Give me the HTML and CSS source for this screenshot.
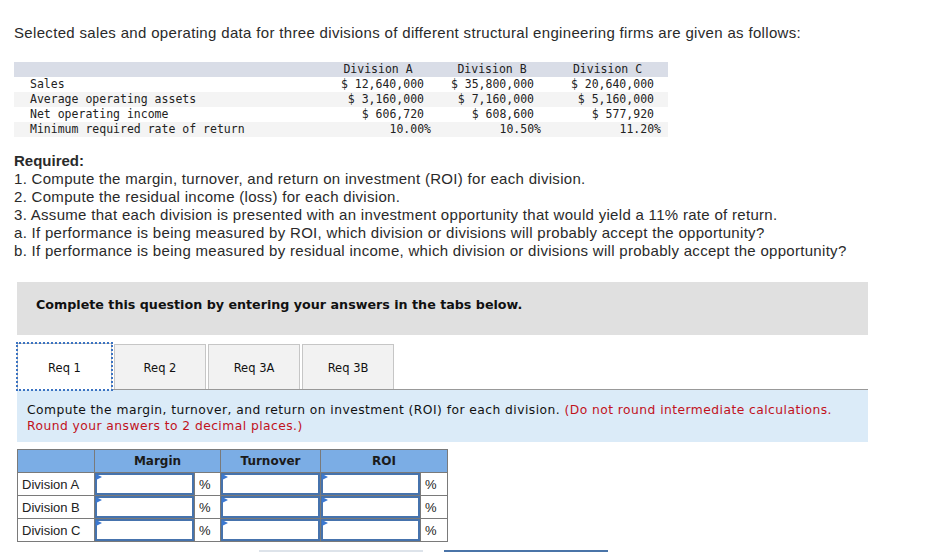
FILE: index.html
```html
<!DOCTYPE html>
<html>
<head>
<meta charset="utf-8">
<link rel="stylesheet" href="styles.css">
</head>
<body>
<div class="page">
  <p class="intro">Selected sales and operating data for three divisions of different structural engineering firms are given as follows:</p>

  <table class="data">
    <thead>
      <tr><th class="lbl"></th><th class="ca">Division A</th><th class="cb">Division B</th><th class="cc">Division C</th></tr>
    </thead>
    <tbody>
      <tr><td class="lbl">Sales</td><td class="v ca">$ 12,640,000</td><td class="v cb">$ 35,800,000</td><td class="v cc">$ 20,640,000</td></tr>
      <tr class="alt"><td class="lbl">Average operating assets</td><td class="v ca">$ 3,160,000</td><td class="v cb">$ 7,160,000</td><td class="v cc">$ 5,160,000</td></tr>
      <tr><td class="lbl">Net operating income</td><td class="v ca">$ 606,720</td><td class="v cb">$ 608,600</td><td class="v cc">$ 577,920</td></tr>
      <tr class="alt"><td class="lbl">Minimum required rate of return</td><td class="p ca">10.00%</td><td class="p cb">10.50%</td><td class="p cc">11.20%</td></tr>
    </tbody>
  </table>

  <div class="required">
    <div class="req-title">Required:</div>
    <div>1. Compute the margin, turnover, and return on investment (ROI) for each division.</div>
    <div>2. Compute the residual income (loss) for each division.</div>
    <div>3. Assume that each division is presented with an investment opportunity that would yield a 11% rate of return.</div>
    <div>a. If performance is being measured by ROI, which division or divisions will probably accept the opportunity?</div>
    <div>b. If performance is being measured by residual income, which division or divisions will probably accept the opportunity?</div>
  </div>

  <div class="question">
    <div class="banner">Complete this question by entering your answers in the tabs below.</div>

    <div class="tabs">
      <div class="tab active">Req 1</div>
      <div class="tab">Req 2</div>
      <div class="tab">Req 3A</div>
      <div class="tab">Req 3B</div>
    </div>

    <div class="panel">
      <div class="panel-line">Compute the margin, turnover, and return on investment (ROI) for each division. <span class="red">(Do not round intermediate calculations.</span></div>
      <div class="panel-line red">Round your answers to 2 decimal places.)</div>
    </div>

    <table class="answer">
      <colgroup>
        <col class="w-lbl"><col class="w-in"><col class="w-pc"><col class="w-in"><col class="w-in"><col class="w-pc2">
      </colgroup>
      <thead>
        <tr><th></th><th colspan="2">Margin</th><th>Turnover</th><th colspan="2">ROI</th></tr>
      </thead>
      <tbody>
        <tr><td class="rl">Division A</td><td class="in"><div class="box"></div></td><td class="pc">%</td><td class="in"><div class="box"></div></td><td class="in"><div class="box"></div></td><td class="pc">%</td></tr>
        <tr><td class="rl">Division B</td><td class="in"><div class="box"></div></td><td class="pc">%</td><td class="in"><div class="box"></div></td><td class="in"><div class="box"></div></td><td class="pc">%</td></tr>
        <tr><td class="rl">Division C</td><td class="in"><div class="box"></div></td><td class="pc">%</td><td class="in"><div class="box"></div></td><td class="in"><div class="box"></div></td><td class="pc">%</td></tr>
      </tbody>
    </table>

    <div class="nav">
      <div class="nav-btn prev"></div>
      <div class="nav-btn next"></div>
    </div>
  </div>
</div>
</body>
</html>
```

FILE: styles.css
```css
* { box-sizing: border-box; }
html, body { margin: 0; padding: 0; background: #fff; }
body { font-family: "Liberation Sans", Arial, sans-serif; color: #222; overflow: hidden; }

.page { padding: 24px 0 0 14px; }

.intro {
  margin: 0;
  font-size: 15px;
  line-height: 18px;
  letter-spacing: 0.33px;
  color: #2a2a2a;
}

.data {
  margin-top: 20px;
  border-collapse: collapse;
  font-family: "DejaVu Sans Mono", "Liberation Mono", monospace;
  font-size: 11.5px;
  color: #222;
}
.data th, .data td { padding: 0; height: 15px; line-height: 15px; white-space: nowrap; }
.data thead tr { background: #d9dde7; }
.data th { font-weight: normal; text-align: center; }
.data tr.alt { background: #f4f4f4; }
.data .lbl { width: 311px; padding-left: 16px; text-align: left; }
.data .ca { width: 112px; }
.data .cb { width: 110px; }
.data .cc { width: 121px; }
.data td.v { text-align: right; padding-right: 13px; }
.data td.v.cc { padding-right: 14px; }
.data td.p { text-align: right; padding-right: 6px; }
.data td.p.cc { padding-right: 7px; }
.data th.ca { padding-right: 6px; }

.required {
  margin-top: 15px;
  font-size: 15px;
  line-height: 18px;
  letter-spacing: 0.3px;
  color: #2a2a2a;
}
.req-title { font-weight: bold; letter-spacing: 0; }

.question { margin: 22px 0 0 3px; width: 851px; }

.banner {
  background: #e0e0e0;
  height: 53px;
  padding: 0 0 7px 19px;
  font-family: "DejaVu Sans", Verdana, sans-serif;
  font-weight: bold;
  font-size: 12.7px;
  line-height: 16px;
  color: #111;
  display: flex;
  align-items: center;
}

.tabs {
  margin-top: 9px;
  display: flex;
  gap: 2px;
  height: 45px;
}
.tab {
  width: 92px;
  height: 45px;
  background: #f2f2f2;
  border: 1px solid #c6c6c6;
  border-bottom: none;
  display: flex;
  align-items: center;
  justify-content: center;
  font-family: "DejaVu Sans", Verdana, sans-serif;
  font-size: 11.5px;
  color: #111;
  padding-top: 2px;
}
.tab.active {
  width: 95px;
  background: #fff;
  outline: 2px dotted #3b73c2;
  outline-offset: -1px;
  position: relative;
  z-index: 1;
  height: 47px;
  margin-top: -1px;
  margin-bottom: -1px;
}

.panel {
  background: #dbebf8;
  border-top: 1px solid #999;
  height: 53px;
  padding: 12px 10px 0 10px;
  font-family: "DejaVu Sans", Verdana, sans-serif;
  font-size: 12.3px;
  letter-spacing: 0.45px;
  line-height: 16px;
  color: #111;
}
.panel-line { white-space: nowrap; }
.red { color: #c1121c; }

.answer {
  margin-top: 7px;
  border-collapse: collapse;
  table-layout: fixed;
  width: 430px;
}
.w-lbl { width: 77px; }
.w-in { width: 100px; }
.w-pc { width: 26px; }
.w-pc2 { width: 27px; }
.answer th, .answer td { border: 1px solid #7a7a7a; padding: 0; height: 23px; }
.answer thead tr { background: #7badE5; }
.answer th {
  font-family: "DejaVu Sans", Verdana, sans-serif;
  font-weight: bold;
  font-size: 12px;
  color: #1b1b1b;
  text-align: center;
}
.answer td.rl {
  font-size: 13px;
  color: #222;
  padding-left: 4px;
  background: #fff;
}
.answer td.pc {
  font-size: 13px;
  padding-left: 4px;
  background: #fff;
}
.answer td.in { position: relative; }
.box {
  height: 22px;
  border: 2px solid #4673ad;
  background: #fff;
  position: relative;
}
.box::before {
  content: "";
  position: absolute;
  left: -1px;
  top: -1px;
  border-left: 6px solid #3c78d0;
  border-top: 3px solid transparent;
  border-bottom: 3px solid transparent;
}

.nav {
  margin-top: 8px;
  display: flex;
  gap: 21px;
  padding-left: 242px;
}
.nav-btn { width: 164px; height: 20px; }
.nav-btn.prev { border-top: 2px solid #dde3ea; }
.nav-btn.next { border-top: 2px solid #4a74a8; }
```
